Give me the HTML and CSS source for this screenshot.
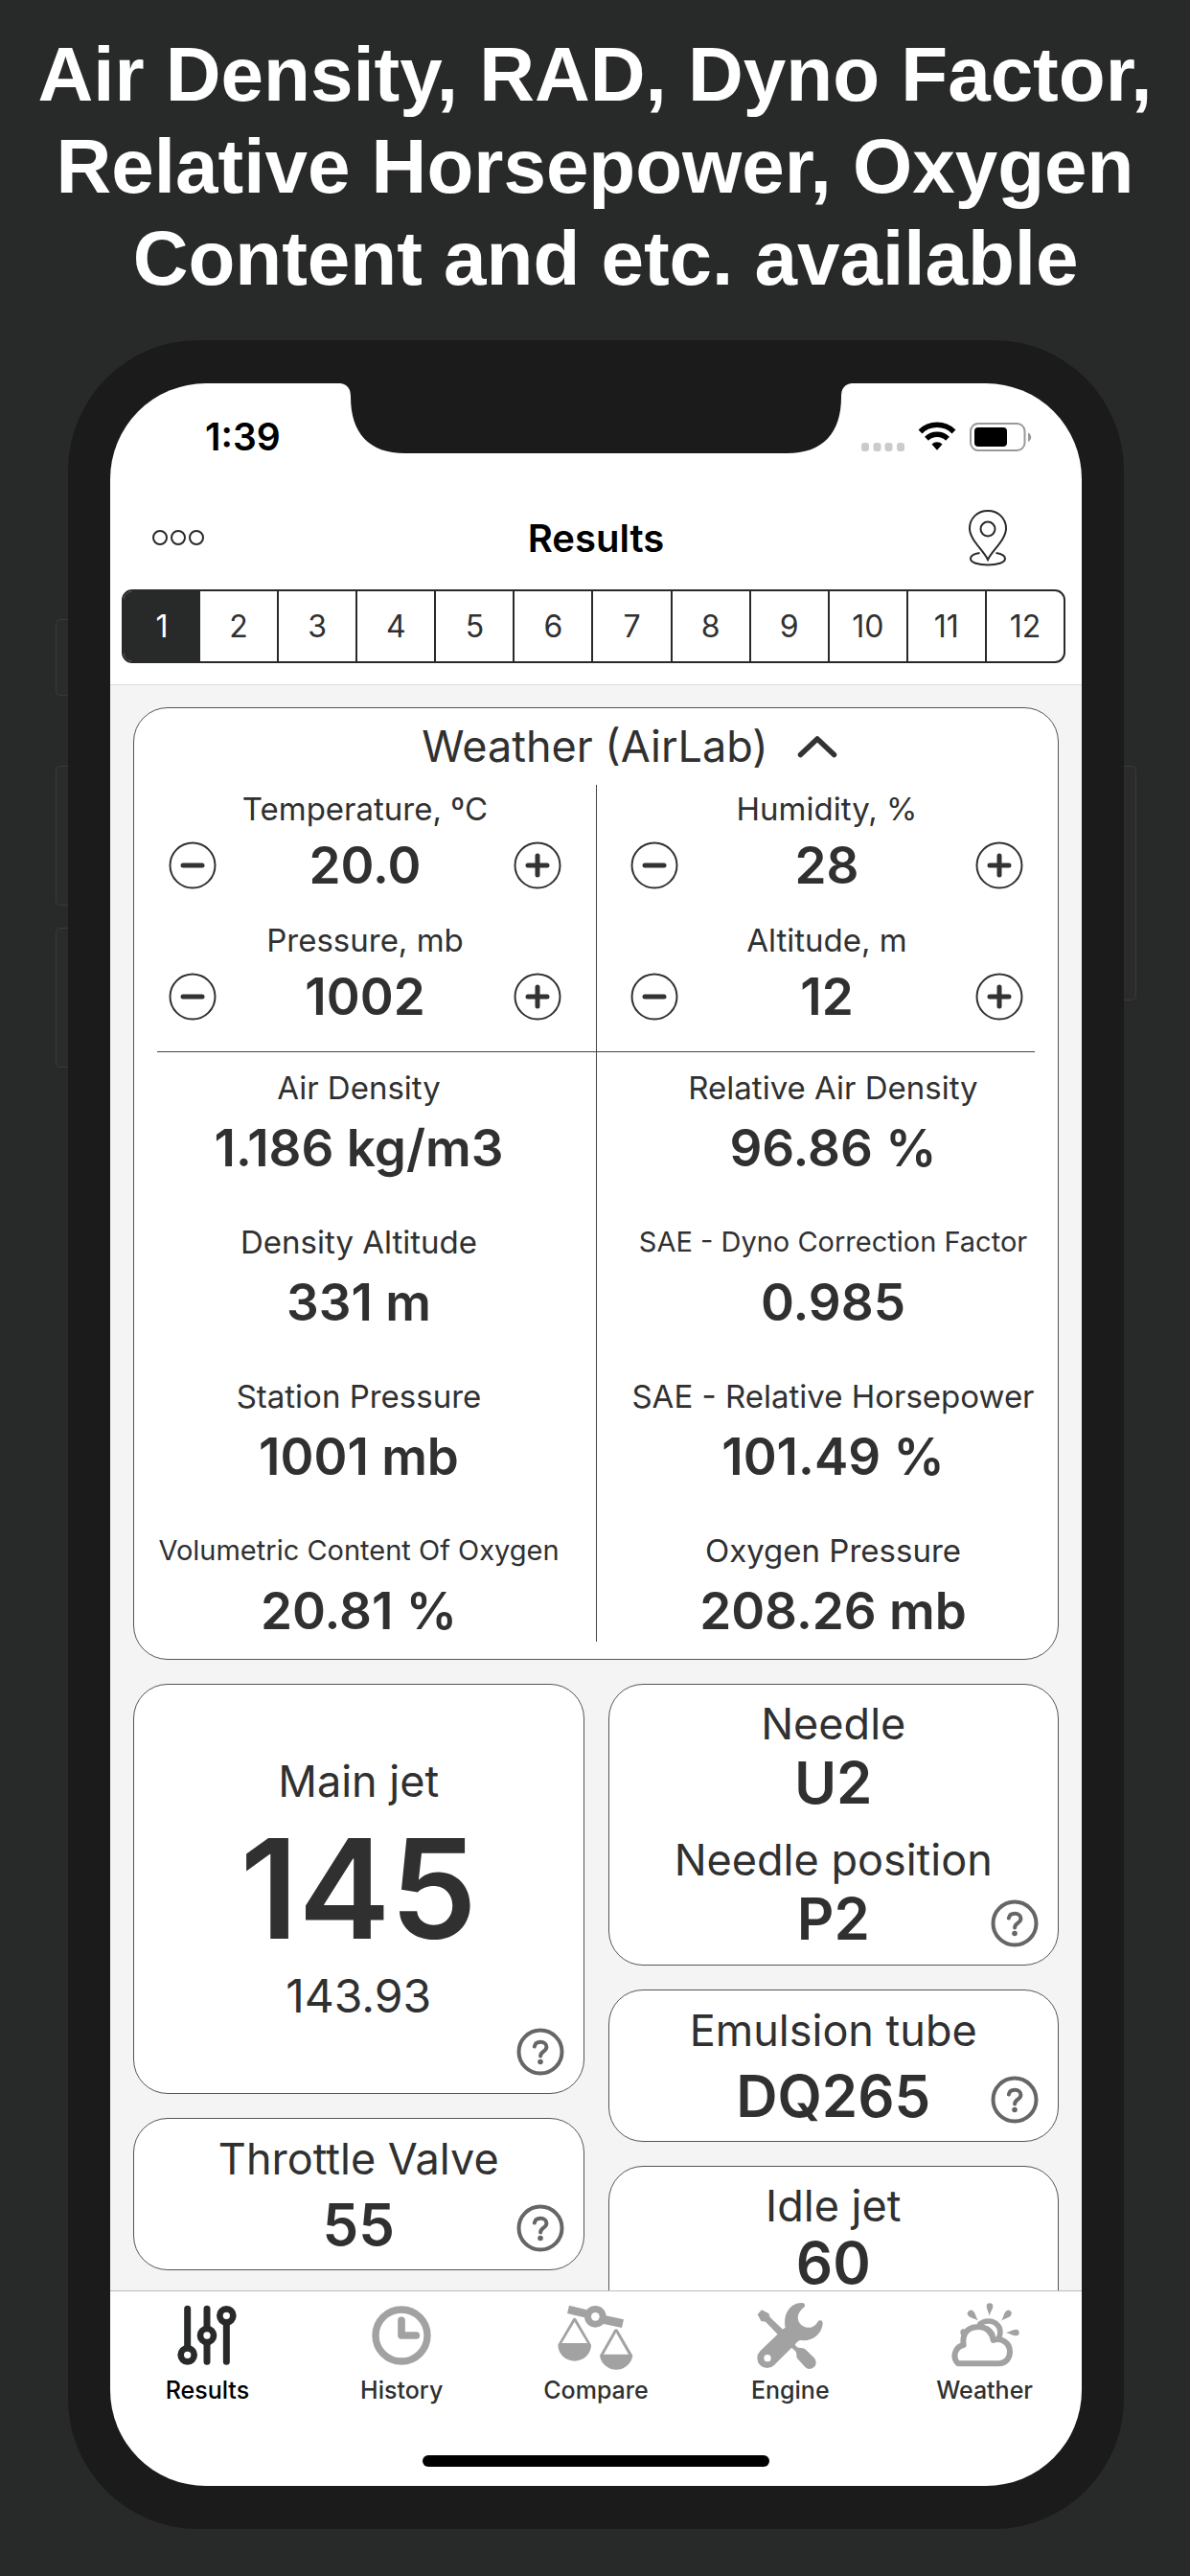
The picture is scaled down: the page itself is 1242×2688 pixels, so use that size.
FILE: index.html
```html
<!DOCTYPE html>
<html lang="en">
<head>
  <meta charset="UTF-8" />
  <meta name="viewport" content="width=device-width, initial-scale=1.0" />
  <title>Results</title>
  <link rel="stylesheet" href="styles.css">
</head>
<body>
  <h1 class="headline">Air Density, RAD, Dyno Factor,<br>Relative Horsepower, Oxygen<br>&nbsp;Content and etc. available</h1>

  <!-- shared symbols -->
  <svg class="defs" width="0" height="0" aria-hidden="true">
    <symbol id="minus" viewBox="0 0 50 50">
      <circle cx="25" cy="25" r="23.5" fill="none" stroke="#333" stroke-width="2" />
      <path d="M15 25h20" stroke="#333" stroke-width="5" stroke-linecap="round" />
    </symbol>
    <symbol id="plus" viewBox="0 0 50 50">
      <circle cx="25" cy="25" r="23.5" fill="none" stroke="#333" stroke-width="2" />
      <path d="M15 25h20M25 15v20" stroke="#333" stroke-width="5" stroke-linecap="round" />
    </symbol>
    <symbol id="help" viewBox="0 0 50 50">
      <circle cx="25" cy="25" r="22.5" fill="none" stroke="#666" stroke-width="4" />
      <path d="M18.800 19.600c.6-3.200 3.200-4.800 6.400-4.800 3.600 0 6.200 2 6.200 5.200 0 4.800-6.300 4.600-6.300 9.600" fill="none" stroke="#666" stroke-width="4" stroke-linecap="round" />
      <circle cx="25" cy="35.500" r="2.800" fill="#666" />
    </symbol>
  </svg>

  <div class="phone">
    <span class="side-key key-mute"></span>
    <span class="side-key key-up"></span>
    <span class="side-key key-down"></span>
    <span class="side-key key-power"></span>

    <main class="screen">
      <svg class="notch" viewBox="0 0 534 73" aria-hidden="true">
        <path d="M0 0C8 1 11 6 11 14C11 52 30 73 68 73H466C504 73 523 52 523 14C523 6 526 1 534 0Z" fill="#1b1b1b" />
      </svg>

      <div class="status-bar">
        <span class="time">1:39</span>
        <svg class="status-icons" viewBox="0 0 180 34" aria-hidden="true">
          <g fill="#cbcbcb">
            <rect x="2" y="23" width="8" height="9" rx="3" />
            <rect x="14.500" y="23" width="8" height="9" rx="3" />
            <rect x="26.500" y="23" width="8" height="9" rx="3" />
            <rect x="39" y="23" width="8" height="9" rx="3" />
          </g>
          <g fill="none" stroke="#000" stroke-width="5.500">
            <path d="M63.500 11.500a25 25 0 0 1 35 0" />
            <path d="M70 18.800a15.500 15.500 0 0 1 22 0" />
          </g>
          <path d="M75.500 24.500a8 8 0 0 1 11 0L81 30.800z" />
          <rect x="116" y="3" width="56.500" height="28" rx="8" fill="none" stroke="#999" stroke-width="2" />
          <rect x="120" y="7" width="34" height="20" rx="4" />
          <path d="M176 12.500c4.200 1.500 4.200 8 0 9.500z" fill="#999" />
        </svg>
      </div>

      <header class="nav-bar">
        <button class="nav-btn" aria-label="Menu">
          <svg width="56" height="18" viewBox="0 0 56 18" fill="none" stroke="#282a29" stroke-width="2">
            <circle cx="9" cy="9" r="7" /><circle cx="28" cy="9" r="7" /><circle cx="47" cy="9" r="7" />
          </svg>
        </button>
        <h2>Results</h2>
        <button class="nav-btn location" aria-label="Location">
          <svg width="42" height="60" viewBox="0 0 42 60" fill="none" stroke="#282a29" stroke-width="2">
            <path d="M21 53C17 44 2 32 2 20.500C2 9.500 10.500 2 21 2S40 9.500 40 20.500C40 32 25 44 21 53Z" />
            <circle cx="21" cy="21" r="7.500" />
            <path d="M12.500 46C6 47 3 49 3 52c0 4 8 6.500 18 6.500S39 56 39 52c0-3-3-5-9.500-6" />
          </svg>
        </button>
      </header>

      <div class="segments">
        <button class="active">1</button>
        <button>2</button>
        <button>3</button>
        <button>4</button>
        <button>5</button>
        <button>6</button>
        <button>7</button>
        <button>8</button>
        <button>9</button>
        <button>10</button>
        <button>11</button>
        <button>12</button>
      </div>

      <div class="content">
        <section class="card weather">
          <button class="weather-title">
            Weather (AirLab)
            <svg width="42" height="24" viewBox="0 0 42 24" fill="none" stroke="#333" stroke-width="5.500" stroke-linecap="round" stroke-linejoin="round">
              <path d="M3.500 20.500L21 4L38.500 20.500" />
            </svg>
          </button>

          <div class="weather-body">
            <div class="inputs">
              <div class="input-cell">
                <span class="label">Temperature, ºC</span>
                <div class="stepper">
                  <button aria-label="Decrease temperature"><svg><use href="#minus" /></svg></button>
                  <output>20.0</output>
                  <button aria-label="Increase temperature"><svg><use href="#plus" /></svg></button>
                </div>
              </div>
              <div class="input-cell">
                <span class="label">Humidity, %</span>
                <div class="stepper">
                  <button aria-label="Decrease humidity"><svg><use href="#minus" /></svg></button>
                  <output>28</output>
                  <button aria-label="Increase humidity"><svg><use href="#plus" /></svg></button>
                </div>
              </div>
              <div class="input-cell">
                <span class="label">Pressure, mb</span>
                <div class="stepper">
                  <button aria-label="Decrease pressure"><svg><use href="#minus" /></svg></button>
                  <output>1002</output>
                  <button aria-label="Increase pressure"><svg><use href="#plus" /></svg></button>
                </div>
              </div>
              <div class="input-cell">
                <span class="label">Altitude, m</span>
                <div class="stepper">
                  <button aria-label="Decrease altitude"><svg><use href="#minus" /></svg></button>
                  <output>12</output>
                  <button aria-label="Increase altitude"><svg><use href="#plus" /></svg></button>
                </div>
              </div>
            </div>

            <dl class="readings">
              <div><dt>Air Density</dt><dd>1.186 kg/m3</dd></div>
              <div><dt>Relative Air Density</dt><dd>96.86 %</dd></div>
              <div><dt>Density Altitude</dt><dd>331 m</dd></div>
              <div><dt class="small">SAE - Dyno Correction Factor</dt><dd>0.985</dd></div>
              <div><dt>Station Pressure</dt><dd>1001 mb</dd></div>
              <div><dt>SAE - Relative Horsepower</dt><dd>101.49 %</dd></div>
              <div><dt class="small">Volumetric Content Of Oxygen</dt><dd>20.81 %</dd></div>
              <div><dt>Oxygen Pressure</dt><dd>208.26 mb</dd></div>
            </dl>
          </div>
        </section>

        <div class="columns">
          <div class="column">
            <section class="card jet main-jet">
              <h3>Main jet</h3>
              <p class="big">145</p>
              <p class="exact">143.93</p>
              <button class="help" aria-label="Help"><svg><use href="#help" /></svg></button>
            </section>
            <section class="card jet">
              <h3>Throttle Valve</h3>
              <p class="value">55</p>
              <button class="help" aria-label="Help"><svg><use href="#help" /></svg></button>
            </section>
          </div>

          <div class="column">
            <section class="card jet needle">
              <h3>Needle</h3>
              <p class="value">U2</p>
              <h3>Needle position</h3>
              <p class="value">P2</p>
              <button class="help" aria-label="Help"><svg><use href="#help" /></svg></button>
            </section>
            <section class="card jet">
              <h3>Emulsion tube</h3>
              <p class="value">DQ265</p>
              <button class="help" aria-label="Help"><svg><use href="#help" /></svg></button>
            </section>
            <section class="card jet idle">
              <h3>Idle jet</h3>
              <p class="value">60</p>
            </section>
          </div>
        </div>
      </div>

      <nav class="tab-bar">
        <a href="#" class="active">
          <svg viewBox="167 96 240 222" fill="none" stroke="#282a29">
            <path d="M226 118V238M287 118V176M287 226V283M348 164V283" stroke-width="21" stroke-linecap="round" />
            <g stroke-width="20"><circle cx="226" cy="262" r="21" /><circle cx="287" cy="201" r="21" /><circle cx="348" cy="139" r="21" /></g>
          </svg>
          Results
        </a>
        <a href="#">
          <svg viewBox="778 96 240 222" fill="none" stroke="#a2a2a2" stroke-linecap="round" stroke-linejoin="round">
            <circle cx="898" cy="201" r="81" stroke-width="22" />
            <path d="M898 154V201H944" stroke-width="23" />
          </svg>
          History
        </a>
        <a href="#">
          <svg viewBox="36 18 240 222" fill="#a2a2a2">
            <path d="M72 29L122 41L187 61L243 73L237 99L180 87L120 67L66 54Z" />
            <circle cx="154" cy="64" r="34" />
            <circle cx="154" cy="64" r="13" fill="#fff" />
            <path d="M37 152L84 71Q89 66 94 71L141 152A52 51 0 0 1 37 152ZM49 147H129L89 80Z" fill-rule="evenodd" />
            <path d="M168 186L214 105Q219 100 224 105L271 186A52 51 0 0 1 168 186ZM180 182H258L219 114Z" fill-rule="evenodd" />
          </svg>
          Compare
        </a>
        <a href="#">
          <svg viewBox="642 18 240 222" fill="#a2a2a2">
            <path d="M746 98C738 58 760 20 798 21C808 22 810 29 804 35C786 48 780 68 790 83C802 100 824 104 840 90C848 82 848 78 852 76C859 74 864 79 863 87C858 124 826 142 797 138C789 137 786 141 780 147L711 216A31 31 0 0 1 667 172L739 103Z" />
            <path d="M659 57L672 43L694 54L698 66L742 108L726 124L684 80L670 78Z" />
            <path d="M770 144L782 159C790 164 800 160 808 166L836 193A20 20 0 0 1 808 222L784 196C778 186 784 180 777 172L760 157Z" />
            <circle cx="690" cy="194" r="11" fill="#fff" />
          </svg>
          Engine
        </a>
        <a href="#">
          <svg viewBox="1251 18 240 222" fill="#a2a2a2">
            <path d="M1385 62C1382 48 1376 40 1376 32A10 10 0 0 1 1396 32C1396 40 1388 48 1385 62Z" />
            <path d="M1350 77C1338 69 1322 68 1318 60A10 10 0 0 1 1336 49C1342 55 1342 66 1350 77Z" />
            <path d="M1422 77C1429 66 1430 54 1436 48A10 10 0 0 1 1452 60C1448 68 1434 69 1422 77Z" />
            <path d="M1436 114C1450 111 1458 104 1468 104A10 10 0 0 1 1468 124C1458 124 1450 117 1436 114Z" />
            <path d="M1352 90C1368 74 1396 74 1410 90C1422 102 1420 120 1414 130" fill="none" stroke="#a2a2a2" stroke-width="17" />
            <path d="M1368 95C1384 97 1394 108 1400 124" fill="none" stroke="#a2a2a2" stroke-width="8" />
            <circle cx="1304" cy="113" r="10" />
            <path d="M1287 211A34 34 0 0 1 1304 153C1298 110 1324 96 1350 96C1376 96 1394 114 1397 138C1424 128 1449 148 1449 174C1449 196 1434 211 1414 211Z" fill="#fff" stroke="#a2a2a2" stroke-width="18" stroke-linejoin="round" />
          </svg>
          Weather
        </a>
      </nav>
      <div class="home-indicator"></div>
    </main>
  </div>
</body>
</html>
```
FILE: styles.css
```css
* {
  box-sizing: border-box;
  margin: 0;
  padding: 0;
}

body {
  font-family: Inter, "Liberation Sans", sans-serif;
  background: #282a29;
  color: #303030;
  display: flex;
  flex-direction: column;
  height: 100vh;
  padding: 30px 69px 49px 71px;
  overflow: hidden;
}

button {
  font: inherit;
  color: inherit;
  background: none;
  border: none;
  cursor: pointer;
}

svg {
  display: block;
}

.defs {
  position: absolute;
}

.headline {
  font-family: "Liberation Sans", Arial, sans-serif;
  font-size: 80px;
  line-height: 96px;
  font-weight: bold;
  color: #fff;
  text-align: center;
  white-space: nowrap;
  margin: 0 -69px 37px -71px;
}

/* phone frame */
.phone {
  flex: 1;
  min-height: 0;
  position: relative;
  background: #1b1b1b;
  border-radius: 136px;
  padding: 45px 44px;
}

.side-key {
  position: absolute;
  left: -13px;
  width: 13px;
  background: #2b2b2b;
  border: 1px solid #393939;
  border-right: none;
  border-radius: 5px 0 0 5px;
}

.key-mute {
  top: 291px;
  height: 80px;
}

.key-up {
  top: 444px;
  height: 146px;
}

.key-down {
  top: 613px;
  height: 146px;
}

.key-power {
  left: auto;
  right: -13px;
  top: 444px;
  height: 245px;
  border-right: 1px solid #393939;
  border-left: none;
  border-radius: 0 5px 5px 0;
}

.screen {
  position: relative;
  display: flex;
  flex-direction: column;
  height: 100%;
  background: #fff;
  border-radius: 100px;
  overflow: hidden;
}

.notch {
  position: absolute;
  top: 0;
  left: 50%;
  width: 534px;
  height: 73px;
  transform: translateX(-50%);
}

.status-bar {
  display: flex;
  justify-content: space-between;
  align-items: center;
  height: 111px;
  padding: 0 52px 0 99px;
}

.time {
  font-size: 39px;
  font-weight: 600;
  color: #000;
}

.status-icons {
  width: 180px;
  height: 34px;
}

.nav-bar {
  display: grid;
  grid-template-columns: 1fr auto 1fr;
  align-items: center;
  height: 100px;
  padding: 0 43px;
}

.nav-bar h2 {
  font-size: 40px;
  font-weight: 600;
  color: #000;
}

.nav-btn {
  display: flex;
}

.nav-btn.location {
  justify-self: end;
  margin-right: 34px;
}

.segments {
  display: flex;
  height: 77px;
  margin: 4px 17px 22px 12px;
  border: 2px solid #282a29;
  border-radius: 11px;
  overflow: hidden;
  flex-shrink: 0;
}

.segments button {
  flex: 1;
  font-size: 32px;
  border-left: 2px solid #282a29;
}

.segments button.active {
  background: #282a29;
  color: #fff;
  border: none;
}

.segments button.active + button {
  border-left: none;
}

/* scrolling area */
.content {
  flex: 1;
  min-height: 0;
  overflow: hidden;
  background: #f4f4f4;
  border-top: 1px solid #ddd;
  padding: 23px 24px 0;
}

.card {
  background: #fff;
  border: 1px solid #555;
  border-radius: 36px;
}

.weather {
  padding-bottom: 18px;
}

.weather-title {
  display: flex;
  justify-content: center;
  align-items: center;
  gap: 30px;
  width: 100%;
  padding-left: 70px;
  font-size: 45px;
  line-height: 80px;
}

.weather-body {
  position: relative;
}

.weather-body::before {
  content: "";
  position: absolute;
  top: 0;
  bottom: 0;
  left: 50%;
  width: 1px;
  background: #444;
}

.inputs {
  display: grid;
  grid-template-columns: 1fr 1fr;
  row-gap: 28px;
  margin: 0 24px;
  padding-bottom: 32px;
  border-bottom: 1px solid #444;
}

.input-cell {
  text-align: center;
}

.label {
  display: block;
  font-size: 33px;
  line-height: 50px;
  margin-bottom: 9px;
}

.input-cell:nth-child(odd) {
  margin-left: -24px;
}

.input-cell:nth-child(even) {
  margin-right: -24px;
}

.stepper {
  display: flex;
  justify-content: space-between;
  align-items: center;
  height: 50px;
  padding: 0 36px;
}

.stepper svg,
.help svg {
  width: 50px;
  height: 50px;
}

.stepper output {
  font-size: 53px;
  font-weight: 600;
}

.readings {
  display: grid;
  grid-template-columns: 1fr 1fr;
  gap: 46px 74px;
  padding: 15px 24px 2px;
  text-align: center;
  white-space: nowrap;
}

.readings dt {
  font-size: 33px;
  line-height: 44px;
  margin-bottom: 11px;
}

.readings dt.small {
  font-size: 29px;
}

.readings dd {
  font-size: 53px;
  line-height: 60px;
  font-weight: 600;
}

.columns {
  display: grid;
  grid-template-columns: 1fr 1fr;
  gap: 25px;
  margin-top: 25px;
}

.column {
  display: flex;
  flex-direction: column;
  gap: 25px;
}

.jet {
  position: relative;
  text-align: center;
  padding: 14px 20px 7px;
}

.jet h3 {
  font-size: 45px;
  line-height: 56px;
  font-weight: 400;
}

.jet .value {
  font-size: 60px;
  line-height: 80px;
  font-weight: 600;
}

.main-jet {
  padding: 73px 20px;
}

.main-jet .big {
  font-size: 144px;
  line-height: 168px;
  font-weight: 600;
}

.main-jet .exact {
  font-size: 48px;
  line-height: 56px;
}

.needle {
  padding: 13px 20px 15px;
}

.needle .value {
  line-height: 66px;
}

.needle .value + h3 {
  margin-top: 20px;
}

.idle {
  padding: 13px 20px 60px;
}

.idle .value {
  line-height: 62px;
}

.help {
  position: absolute;
  right: 20px;
  bottom: 18px;
}

/* bottom tabs */
.tab-bar {
  display: flex;
  border-top: 1px solid #bbb;
  padding-top: 11px;
}

.tab-bar a {
  flex: 1;
  display: flex;
  flex-direction: column;
  align-items: center;
  gap: 3px;
  font-size: 25px;
  line-height: 30px;
  font-weight: 500;
  color: #303030;
  text-decoration: none;
}

.tab-bar a.active {
  color: #000;
}

.tab-bar svg {
  width: 80px;
  height: 74px;
}

.home-indicator {
  width: 362px;
  height: 12px;
  margin: 53px auto 20px;
  border-radius: 6px;
  background: #000;
  flex-shrink: 0;
}
```
